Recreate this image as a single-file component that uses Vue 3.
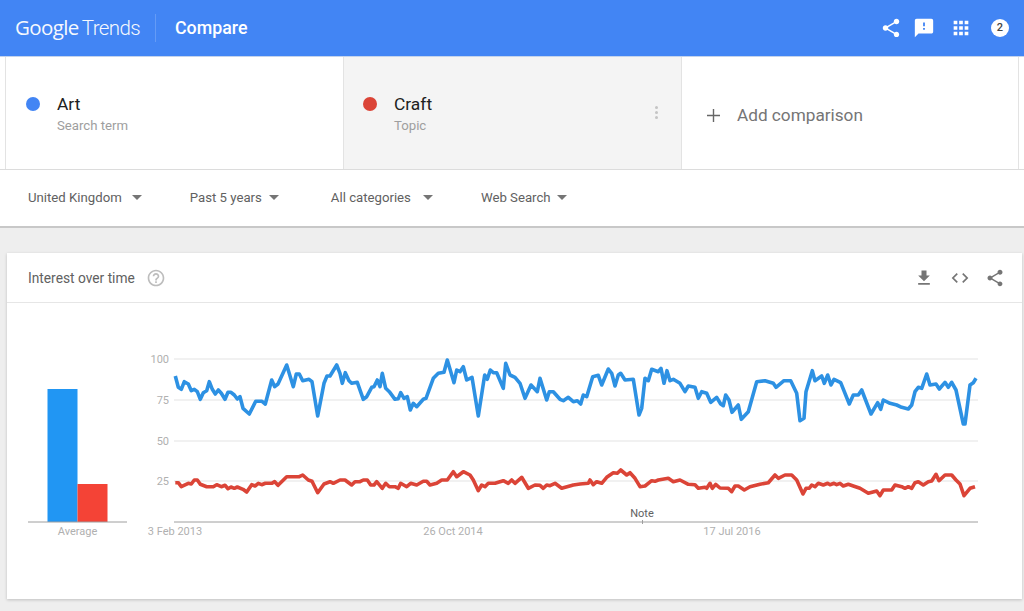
<script setup>
import { computed } from "vue";

const terms = [
  { name: "Art", type: "Search term", color: "#4285f4", active: false },
  { name: "Craft", type: "Topic", color: "#db4437", active: true },
];

const filters = ["United Kingdom", "Past 5 years", "All categories", "Web Search"];

const gridLines = [
  { y: 359, label: "100" },
  { y: 400, label: "75" },
  { y: 441, label: "50" },
  { y: 481, label: "25" },
];

const dates = [
  { x: 175, label: "3 Feb 2013" },
  { x: 453, label: "26 Oct 2014" },
  { x: 732, label: "17 Jul 2016" },
];

// traced from 3x crops, each block is [x, y] in crop pixels, first number is the crop's left edge
const artTrace = [
  [0, [526,108,535,142,544,148,553,125,565,132,574,152,583,148,592,155,601,178,610,158,620,152,628,125,637,148,646,162,655,150,664,160,675,178,684,157,693,157,703,165,712,177,720,170,729,205,748,222,767,184,786,184,796,192,815,120,824,140,834,132,860,75,880,140,889,102,898,102,908,122,927,118,936,125,953,228,972,130,981,108,990,108,1010,75]],
  [340, [0,100,7,130,16,98,27,122,35,130,52,127,70,178,80,170,95,142,102,140,112,120,120,140,127,100,137,145,148,155,165,178,175,176,182,158,192,175,202,170,211,210,220,190,230,200,250,178,258,175,280,115,295,100,312,97,322,60,342,128,350,90,360,95,370,80,380,120,396,112,415,228,434,105,442,118,451,90,460,98,470,98,490,145,497,70,510,105,525,112,540,130,555,175,573,135,592,155,600,115,620,180,628,155,640,155,660,178,670,182,685,172,700,185,712,182,722,192,730,165,740,170,758,110,775,106,785,135,805,87,815,100,825,138,835,105,842,100,855,120,880,118,897,225,905,205,915,115,925,122,935,88,955,95,963,85,972,130,981,92,990,122,1000,118]],
  [680, [0,130,15,155,25,138,45,142,55,175,65,155,80,160,92,187,110,172,122,192,130,197,137,165,147,180,156,217,175,195,184,238,205,215,230,125,255,122,280,130,288,142,312,122,332,122,350,160,360,242,372,235,378,155,397,92,405,122,425,108,433,130,443,105,453,135,462,118,482,128,508,192,520,165,535,165,545,150,573,222,593,188,602,208,610,180,630,190,650,195,665,202,685,207,695,195,705,155,715,142,725,145,740,102,750,135,768,132,778,147,795,127,805,142,815,127,828,150,850,252,855,252,870,135,880,128,888,115]],
];

const craftTrace = [
  [0, [526,428,535,428,544,440,565,430,574,432,583,420,592,420,601,433,620,440,640,440,650,434,664,440,675,436,684,446,693,441,703,445,712,441,729,448,740,456,755,434,765,438,775,430,785,434,796,430,815,430,824,425,834,436,860,410,898,410,908,405,925,420,936,424,953,458,972,432,990,425,1000,430]],
  [340, [0,420,15,420,35,435,45,425,60,425,70,420,82,420,92,435,102,435,110,425,127,445,137,430,148,440,165,440,175,445,182,430,200,440,212,430,230,435,250,424,260,424,270,435,290,430,305,420,322,420,340,395,350,410,370,395,390,405,400,420,415,452,425,435,435,440,445,430,465,430,490,422,505,430,515,420,525,430,545,412,565,445,585,435,600,436,610,445,620,435,630,437,645,430,665,445,700,435,720,432,745,430,750,420,760,434,770,425,785,430,800,412,820,398,832,400,842,390,860,405,870,398,885,415,900,440,915,438,935,422,945,424,955,420,985,415,1000,425]],
  [680, [0,420,25,433,45,434,55,445,75,442,80,445,90,430,97,445,107,433,120,444,145,445,155,455,165,438,175,438,193,450,210,440,240,433,265,428,285,405,295,415,315,405,335,405,350,420,369,462,378,445,388,445,395,435,405,440,415,430,430,435,443,430,450,434,462,430,470,434,480,430,490,438,505,433,520,438,540,445,565,460,590,453,600,467,610,450,635,450,645,435,665,440,675,445,685,440,695,445,705,428,715,425,730,435,745,425,755,423,768,403,777,422,795,405,815,405,828,420,840,432,852,467,870,445,885,440]],
];

const toPoints = (trace) => {
  const points = [];
  for (const [left, values] of trace) {
    for (let i = 0; i < values.length; i += 2) {
      const x = left + values[i] / 3;
      const y = 340 + values[i + 1] / 3;
      points.push(`${x.toFixed(1)},${y.toFixed(1)}`);
    }
  }
  return points.join(" ");
};

const artPoints = computed(() => toPoints(artTrace));
const craftPoints = computed(() => toPoints(craftTrace));
</script>

<template>
  <div class="page">
    <header class="topbar">
      <div class="logo"><span class="logo-google">Google</span> <span class="logo-trends">Trends</span></div>
      <div class="divider"></div>
      <div class="title">Compare</div>
      <div class="top-actions">
        <svg class="top-icon share" viewBox="0 0 24 24"><path d="M18 16.08c-.76 0-1.44.3-1.96.77L8.91 12.7c.05-.23.09-.46.09-.7s-.04-.47-.09-.7l7.05-4.11c.54.5 1.25.81 2.04.81 1.66 0 3-1.34 3-3s-1.34-3-3-3-3 1.34-3 3c0 .24.04.47.09.7L8.04 9.81C7.5 9.31 6.79 9 6 9c-1.66 0-3 1.34-3 3s1.34 3 3 3c.79 0 1.5-.31 2.04-.81l7.12 4.16c-.05.21-.08.43-.08.65 0 1.61 1.31 2.92 2.92 2.92 1.61 0 2.92-1.31 2.92-2.92s-1.31-2.92-2.92-2.92z" /></svg>
        <svg class="top-icon feedback" viewBox="0 0 24 24"><path d="M20 2H4c-1.1 0-1.99.9-1.99 2L2 22l4-4h14c1.1 0 2-.9 2-2V4c0-1.1-.9-2-2-2zm-7 12h-2v-2h2v2zm0-4h-2V6h2v4z" /></svg>
        <svg class="top-icon apps" viewBox="0 0 24 24"><path d="M4 8h4V4H4v4zm6 12h4v-4h-4v4zm-6 0h4v-4H4v4zm0-6h4v-4H4v4zm6 0h4v-4h-4v4zm6-10v4h4V4h-4zm-6 4h4V4h-4v4zm6 6h4v-4h-4v4zm0 6h4v-4h-4v4z" /></svg>
        <div class="badge">2</div>
      </div>
    </header>

    <section class="terms">
      <div v-for="term in terms" :key="term.name" class="term" :class="{ active: term.active }">
        <span class="dot" :style="{ background: term.color }"></span>
        <div class="term-text">
          <div class="term-name">{{ term.name }}</div>
          <div class="term-type">{{ term.type }}</div>
        </div>
        <div v-if="term.active" class="more"><i></i><i></i><i></i></div>
      </div>
      <div class="term add">
        <svg class="plus" viewBox="0 0 14 14"><path d="M6.25 0h1.5v6.25H14v1.5H7.75V14h-1.5V7.75H0v-1.5h6.25z" /></svg>
        <span class="add-label">Add comparison</span>
      </div>
    </section>

    <nav class="filters">
      <div v-for="filter in filters" :key="filter" class="filter">
        <span>{{ filter }}</span>
        <span class="caret"></span>
      </div>
    </nav>

    <main class="card">
      <div class="card-head">
        <span class="card-title">Interest over time</span>
        <svg class="help" viewBox="0 0 24 24"><path d="M11 18h2v-2h-2v2zm1-16C6.48 2 2 6.48 2 12s4.48 10 10 10 10-4.48 10-10S17.52 2 12 2zm0 18c-4.41 0-8-3.59-8-8s3.59-8 8-8 8 3.59 8 8-3.59 8-8 8zm0-14c-2.21 0-4 1.79-4 4h2c0-1.1.9-2 2-2s2 .9 2 2c0 2-3 1.75-3 5h2c0-2.25 3-2.5 3-5 0-2.21-1.79-4-4-4z" /></svg>
        <div class="card-actions">
          <svg class="card-icon" viewBox="0 0 24 24"><path d="M19 9h-4V3H9v6H5l7 7 7-7zM5 18v2h14v-2H5z" /></svg>
          <svg class="card-icon" viewBox="0 0 24 24"><path d="M9.4 16.6L4.8 12l4.6-4.6L8 6l-6 6 6 6 1.4-1.4zm5.2 0l4.6-4.6-4.6-4.6L16 6l6 6-6 6-1.4-1.4z" /></svg>
          <svg class="card-icon" viewBox="0 0 24 24"><path d="M18 16.08c-.76 0-1.44.3-1.96.77L8.91 12.7c.05-.23.09-.46.09-.7s-.04-.47-.09-.7l7.05-4.11c.54.5 1.25.81 2.04.81 1.66 0 3-1.34 3-3s-1.34-3-3-3-3 1.34-3 3c0 .24.04.47.09.7L8.04 9.81C7.5 9.31 6.79 9 6 9c-1.66 0-3 1.34-3 3s1.34 3 3 3c.79 0 1.5-.31 2.04-.81l7.12 4.16c-.05.21-.08.43-.08.65 0 1.61 1.31 2.92 2.92 2.92 1.61 0 2.92-1.31 2.92-2.92s-1.31-2.92-2.92-2.92z" /></svg>
        </div>
      </div>

      <!-- viewBox uses page coordinates so the traced points can stay as they are -->
      <svg class="chart" viewBox="7 303 1015 296">
        <rect x="47.5" y="389" width="30" height="133" fill="#2196f3" />
        <rect x="77.5" y="484" width="30" height="38" fill="#f44336" />
        <line x1="28" y1="522" x2="127" y2="522" stroke="#9e9e9e" />
        <text x="77.5" y="535" text-anchor="middle" class="axis">Average</text>

        <g v-for="line in gridLines" :key="line.y">
          <line x1="174" :y1="line.y" x2="978" :y2="line.y" stroke="#e3e3e3" />
          <text x="169" :y="line.y + 4" text-anchor="end" class="axis">{{ line.label }}</text>
        </g>
        <line x1="174" y1="522" x2="978" y2="522" stroke="#9e9e9e" />
        <text v-for="date in dates" :key="date.label" :x="date.x" y="535" text-anchor="middle" class="axis">{{ date.label }}</text>

        <polyline :points="artPoints" fill="none" stroke="#2d91e3" stroke-width="3.6" stroke-linejoin="round" />
        <polyline :points="craftPoints" fill="none" stroke="#db4437" stroke-width="3.6" stroke-linejoin="round" />

        <text x="642" y="517" text-anchor="middle" class="note">Note</text>
        <line x1="642.5" y1="520" x2="642.5" y2="524" stroke="#9e9e9e" />
      </svg>
    </main>
  </div>
</template>

<style scoped>
.page {
  height: 611px;
  overflow: hidden;
  background: #eeeeee;
  font-family: Roboto, "Liberation Sans", sans-serif;
}

.topbar {
  display: flex;
  align-items: center;
  height: 57px;
  padding: 0 15px;
  background: #4285f4;
  border-bottom: 1px solid #c3d3ec;
  color: #fff;
  box-sizing: border-box;
}

.logo {
  width: 126px;
  margin-bottom: 2px;
  font-size: 20px;
  white-space: nowrap;
  opacity: 0.95;
}

.logo-google {
  font-family: "Open Sans", Roboto, sans-serif;
  font-size: 20.5px;
  letter-spacing: -0.6px;
}

.logo-trends {
  font-weight: 300;
  font-size: 20.5px;
  letter-spacing: -0.6px;
  margin-left: -2px;
}

.divider {
  width: 1px;
  height: 28px;
  margin-left: 14px;
  background: rgba(255, 255, 255, 0.18);
}

.title {
  margin: 0 0 2px 19px;
  font-size: 17.8px;
  font-weight: 500;
}

.top-actions {
  display: flex;
  align-items: center;
  margin-left: auto;
}

.top-icon {
  width: 22px;
  height: 22px;
  fill: #fff;
  display: block;
}

.feedback {
  margin-left: 11px;
}

.apps {
  margin-left: 15px;
}

.badge {
  width: 18px;
  height: 18px;
  margin-left: 19px;
  border-radius: 50%;
  background: #fff;
  color: #444;
  font-size: 11px;
  font-weight: 500;
  line-height: 18px;
  text-align: center;
}

.terms {
  display: flex;
  height: 113px;
  padding: 0 4px 0 5px;
  background: #fff;
  border-bottom: 1px solid #dcdcdc;
  box-sizing: border-box;
}

.term {
  display: flex;
  align-items: flex-start;
  position: relative;
  flex: 0 0 338px;
  height: 112px;
  box-sizing: border-box;
  border-left: 1px solid #e3e3e3;
}

.term:last-child {
  border-right: 1px solid #e3e3e3;
}

.term.active {
  background: #f4f4f4;
}

.dot {
  width: 14px;
  height: 14px;
  margin: 40px 0 0 20px;
  border-radius: 50%;
}

.term.active .dot {
  margin-left: 19px;
}

.term-text {
  margin: 37px 0 0 17px;
}

.term-name {
  font-size: 17.4px;
  line-height: 20px;
  color: #212121;
}

.term-type {
  margin-top: 4px;
  font-size: 13.2px;
  line-height: 16px;
  color: #9e9e9e;
}

.more {
  position: absolute;
  top: 49px;
  right: 23px;
  display: flex;
  flex-direction: column;
  gap: 2px;
}

.more i {
  display: block;
  width: 3px;
  height: 3px;
  border-radius: 50%;
  background: #c4c4c4;
}

.add {
  align-items: center;
  padding: 4px 0 0 25px;
}

.plus {
  width: 13px;
  height: 13px;
  fill: #666;
}

.add-label {
  margin-left: 17px;
  font-size: 17.2px;
  color: #757575;
}

.filters {
  display: flex;
  align-items: center;
  height: 58px;
  padding: 0 0 1px 28px;
  background: #fff;
  border-bottom: 2px solid #c8c8c8;
  box-sizing: border-box;
  font-size: 13.2px;
  color: #616161;
}

.filter {
  display: flex;
  align-items: center;
  margin-right: 48px;
  white-space: nowrap;
}

.filter:nth-child(2) {
  margin-right: 52px;
}

.caret {
  width: 0;
  height: 0;
  margin-left: 10px;
  border-left: 5px solid transparent;
  border-right: 5px solid transparent;
  border-top: 5px solid #757575;
}

.filter:nth-child(2) .caret {
  margin-left: 7px;
}

.filter:nth-child(3) .caret {
  margin-left: 12px;
}

.filter:nth-child(4) .caret {
  margin-left: 6px;
}

.card {
  margin: 25px 2px 0 7px;
  background: #fff;
  box-shadow: 0 1px 3px rgba(0, 0, 0, 0.2);
}

.card-head {
  display: flex;
  align-items: center;
  height: 50px;
  padding: 0 17px 0 21px;
  border-bottom: 1px solid #e6e6e6;
  box-sizing: border-box;
}

.card-title {
  font-size: 13.75px;
  color: #616161;
}

.help {
  width: 20px;
  height: 20px;
  margin-left: 11px;
  fill: #bdbdbd;
}

.card-actions {
  display: flex;
  align-items: center;
  gap: 15.5px;
  margin-left: auto;
}

.card-icon {
  width: 20px;
  height: 20px;
  fill: #757575;
}

.chart {
  display: block;
  width: 1015px;
  height: 296px;
}

.axis {
  font-size: 11px;
  fill: #b0b0b0;
}

.note {
  font-size: 11px;
  fill: #616161;
}
</style>

<style>
html,
body {
  background: #eeeeee;
}
</style>
